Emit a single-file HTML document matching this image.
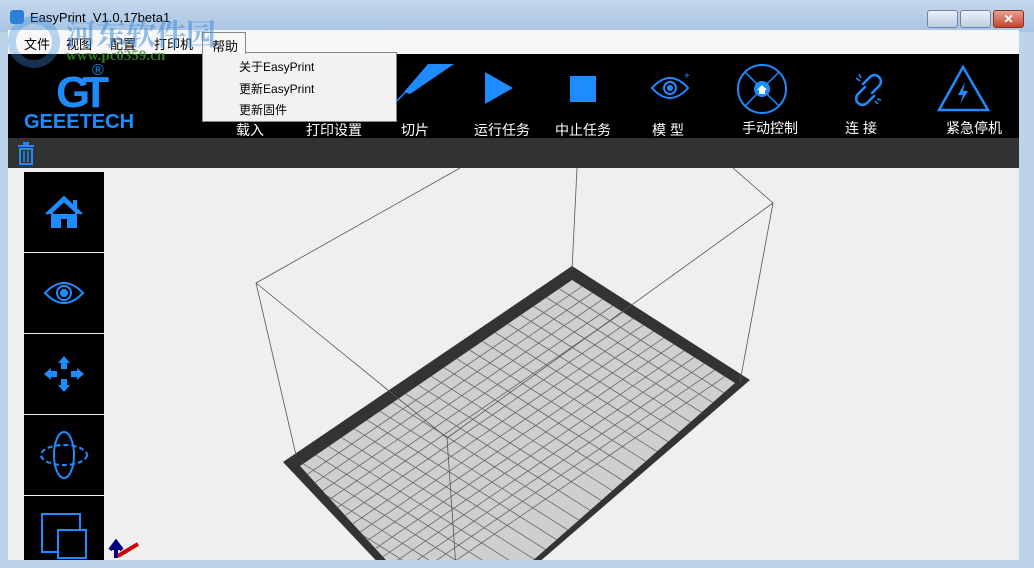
<!DOCTYPE html>
<html><head><meta charset="utf-8"><style>
*{margin:0;padding:0;box-sizing:border-box}
body{width:1034px;height:568px;overflow:hidden;position:relative;background:#bcd3ea;font-family:"Liberation Sans","Noto Sans CJK SC",sans-serif}
.abs{position:absolute}
#title{left:0;top:0;width:1034px;height:32px;background:linear-gradient(#c5d7ec,#a9c4e2)}
#menu{left:8px;top:30px;width:1011px;height:24px;background:#f7f7f7;font-size:13px}
#menu span{position:absolute;top:4px}
#tb{left:8px;top:54px;width:1011px;height:84px;background:#000}
#gb{left:8px;top:138px;width:1011px;height:30px;background:#323232}
#vp{left:8px;top:168px;width:1011px;height:392px;background:#efefef;overflow:hidden}
.lbl{position:absolute;color:#fff;font-size:14px;top:66px;transform:translateX(-50%);white-space:nowrap}
.side{position:absolute;left:16px;width:80px;height:80px;background:#000;overflow:hidden}
.wb{position:absolute;top:10px;height:18px;border:1px solid #6f84a0;border-radius:3px;background:linear-gradient(#eaf1f9,#bccde3)}
</style></head><body>
<div id="title" class="abs">
 <div class="abs" style="left:10px;top:10px;width:14px;height:14px;background:#2a7fd6;border-radius:3px"></div>
 <div class="abs" style="left:30px;top:10px;font-size:13px;color:#000">EasyPrint&nbsp;&nbsp;V1.0.17beta1</div>
 <div class="wb" style="left:927px;width:31px"></div>
 <div class="wb" style="left:960px;width:31px"></div>
 <div class="wb" style="left:993px;width:31px;background:linear-gradient(#e9a193,#c4452f);border-color:#8a3020;color:#fff;font-size:12px;text-align:center;line-height:16px;font-weight:bold">✕</div>
</div>
<div id="menu" class="abs">
 <span style="left:16px">文件</span><span style="left:58px">视图</span><span style="left:102px">配置</span><span style="left:146px">打印机</span>
</div>
<div class="abs" style="left:202px;top:32px;width:44px;height:22px;background:#f7f7f7;border:1px solid #888;border-bottom:none;font-size:13px;padding:3px 0 0 9px;z-index:5">帮助</div>
<div class="abs" style="left:8px;top:16px;width:52px;height:52px;border-radius:50%;border:8px solid rgba(60,140,220,.35);z-index:6"></div>
<div class="abs" style="left:14px;top:10px;font-size:30px;font-weight:bold;color:rgba(60,140,220,.55);z-index:6;font-family:'Noto Serif CJK SC',serif;padding-left:52px">河东软件园</div>
<div class="abs" style="left:66px;top:48px;font-size:15px;font-weight:bold;color:rgba(60,150,40,.8);z-index:6;font-family:'Liberation Serif',serif">www.pc0359.cn</div>
<div id="tb" class="abs">
 <div class="abs" style="left:48px;top:14px;font-size:44px;font-weight:bold;color:#1e8cff;letter-spacing:-8px">GT</div>
 <div class="abs" style="left:84px;top:8px;color:#1e8cff;font-size:16px">®</div>
 <div class="abs" style="left:16px;top:57px;color:#1e8cff;font-size:20px;font-weight:bold">GEEETECH</div>
 <svg class="abs" style="left:0;top:0" width="1011" height="84">
  <polygon points="420,10 446,10 402,40 396,38" fill="#1e8cff"/><line x1="386" y1="50" x2="405" y2="30" stroke="#1e8cff" stroke-width="1.5"/>
  <polygon points="477,18 477,50 505,34" fill="#1e8cff"/>
  <rect x="562" y="22" width="26" height="26" fill="#1e8cff"/>
  <path d="M644,34 Q662,14 680,34 Q662,54 644,34Z" fill="none" stroke="#1e8cff" stroke-width="2"/><circle cx="662" cy="34" r="6" fill="none" stroke="#1e8cff" stroke-width="2"/><circle cx="662" cy="34" r="3" fill="#1e8cff"/><text x="676" y="25" fill="#1e8cff" font-size="10">+</text>
  <circle cx="754" cy="35" r="24" fill="none" stroke="#1e8cff" stroke-width="2"/><line x1="737" y1="18" x2="771" y2="52" stroke="#1e8cff" stroke-width="1.5"/><line x1="771" y1="18" x2="737" y2="52" stroke="#1e8cff" stroke-width="1.5"/><circle cx="754" cy="35" r="8" fill="#1e8cff"/><path d="M749,36 L754,31 L759,36 L757,36 L757,40 L751,40 L751,36Z" fill="#fff"/>
  <g fill="none" stroke="#1e8cff" stroke-width="2.5" stroke-linecap="round"><path d="M855,30 L862,23 a6,6 0 0 1 9,9 L864,39"/><path d="M857,33 L850,40 a6,6 0 0 0 9,9 L866,42"/></g>
  <g stroke="#1e8cff" stroke-width="1.5"><path d="M848,24 l4,3 M851,20 l2,4 M870,50 l-3,-3 M873,46 l-4,-1"/></g>
  <polygon points="955,13 931,56 980,56" fill="none" stroke="#1e8cff" stroke-width="2.5"/><path d="M957,28 L950,41 L955,41 L952,50 L960,37 L955,37Z" fill="#1e8cff"/>
 </svg>
 <div class="lbl" style="left:242px">载入</div><div class="lbl" style="left:326px">打印设置</div><div class="lbl" style="left:407px">切片</div><div class="lbl" style="left:494px">运行任务</div><div class="lbl" style="left:575px">中止任务</div><div class="lbl" style="left:660px">模 型</div><div class="lbl" style="left:762px;top:64px">手动控制</div><div class="lbl" style="left:853px;top:64px">连 接</div><div class="lbl" style="left:966px;top:64px">紧急停机</div>
</div>
<div class="abs" style="left:202px;top:52px;width:195px;height:70px;background:#f2f2f2;border:1px solid #888;font-size:12px;z-index:4">
 <div class="abs" style="left:36px;top:5px">关于EasyPrint</div><div class="abs" style="left:36px;top:27px">更新EasyPrint</div><div class="abs" style="left:36px;top:48px">更新固件</div>
</div>
<div id="gb" class="abs">
 <svg class="abs" style="left:9px;top:4px" width="20" height="24"><rect x="1" y="3" width="16" height="2" fill="#1e8cff"/><rect x="6" y="0" width="6" height="3" fill="#1e8cff"/><rect x="3" y="7" width="12" height="15" fill="none" stroke="#1e8cff" stroke-width="2"/><path d="M7,9v11M11,9v11" stroke="#1e8cff" stroke-width="1.5"/></svg>
</div>
<div id="vp" class="abs">
 <svg class="abs" style="left:-8px;top:-168px" width="1034" height="568">
  <defs><clipPath id="c"><polygon points="572,280 735,383 522,570 395,570 300,466"/></clipPath></defs>
  <polygon points="572,266 750,380 530,570 385,570 283,462" fill="#333"/>
  <polygon points="572,280 735,383 522,570 395,570 300,466" fill="#cfcfcf"/>
  <g id="grid" stroke="#666" stroke-width="0.8" fill="none" clip-path="url(#c)"></g>
  <g stroke="#555" stroke-width="0.8" fill="none">
   <path d="M460,168 L256,283 L296,455 M256,283 L447,438 L456,568 M577,168 L572,270 M733,168 L773,203 L740,382 M773,203 L447,438"/>
  </g>
  <path d="M116,558 L116,546 M110,550 L116,542 L122,550" stroke="#000080" stroke-width="4"/><path d="M118,556 L138,544" stroke="#c00" stroke-width="4"/>
 </svg>
 <div class="side" style="top:4px"><svg width="80" height="80"><path d="M22,42 L40,25 L58,42 M28,40 V55 H36 V46 H44 V55 H52 V40 L40,29Z" fill="#1e8cff" stroke="#1e8cff" stroke-width="2"/><rect x="49" y="28" width="4" height="8" fill="#1e8cff"/></svg></div>
 <div class="side" style="top:85px"><svg width="80" height="80"><path d="M21,40 Q40,20 59,40 Q40,60 21,40Z" fill="none" stroke="#1e8cff" stroke-width="2"/><circle cx="40" cy="40" r="7" fill="none" stroke="#1e8cff" stroke-width="2"/><circle cx="40" cy="40" r="4" fill="#1e8cff"/></svg></div>
 <div class="side" style="top:166px"><svg width="80" height="80"><path d="M40,22 L34,29 H37 V35 H43 V29 H46Z M40,58 L34,51 H37 V45 H43 V51 H46Z M20,40 L27,34 V37 H33 V43 H27 V46Z M60,40 L53,34 V37 H47 V43 H53 V46Z" fill="#1e8cff"/></svg></div>
 <div class="side" style="top:247px"><svg width="80" height="80"><ellipse cx="40" cy="40" rx="10" ry="23" fill="none" stroke="#1e8cff" stroke-width="2"/><ellipse cx="40" cy="40" rx="23" ry="10" fill="none" stroke="#1e8cff" stroke-width="2" stroke-dasharray="5,3"/></svg></div>
 <div class="side" style="top:328px;height:64px"><svg width="80" height="64"><rect x="18" y="18" width="38" height="38" fill="none" stroke="#1e8cff" stroke-width="2"/><rect x="34" y="34" width="28" height="28" fill="#000" stroke="#1e8cff" stroke-width="2"/></svg></div>
</div>
<script>
(function(){var g=document.getElementById('grid'),d='',n=16,m=34,i;
for(i=1;i<n;i++){var t=i/n;d+='M'+(572+163*t)+','+(280+103*t)+' L'+(572+163*t-272*1.6)+','+(280+103*t+186*1.6)+' ';}
for(i=1;i<m;i++){var s=i/m*1.6;d+='M'+(572-272*s)+','+(280+186*s)+' L'+(572-272*s+163*1.6)+','+(280+186*s+103*1.6)+' ';}
var p=document.createElementNS('http://www.w3.org/2000/svg','path');p.setAttribute('d',d);g.appendChild(p);})();
</script>
</body></html>
